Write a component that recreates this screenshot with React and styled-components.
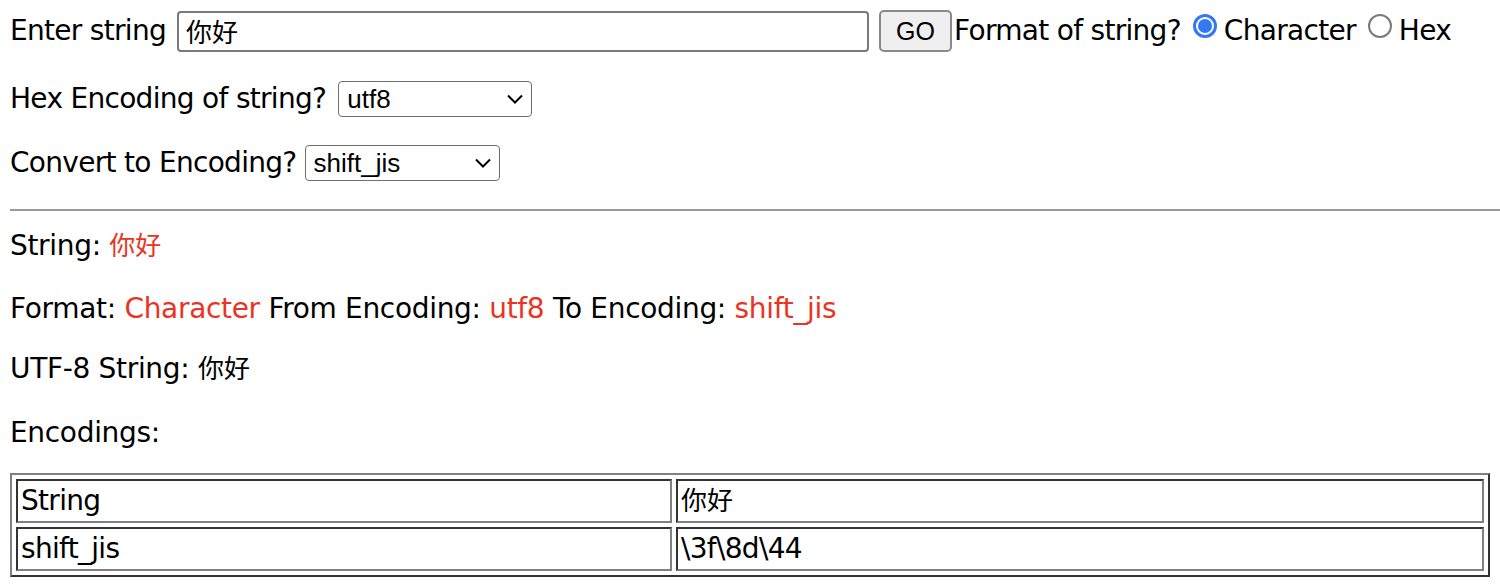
import React from 'react';
import styled, { createGlobalStyle } from 'styled-components';

const GlobalStyle = createGlobalStyle`
  body {
    margin: 0;
    background: #ffffff;
    color: #000000;
    font-family: 'DejaVu Sans', 'Noto Sans CJK SC', sans-serif;
    font-size: 28px;
    letter-spacing: -0.7px;
  }
`;

const Page = styled.div`
  padding: 10px 0 0 10px;
  width: 1490px;
  box-sizing: border-box;
`;

const Row = styled.div`
  display: flex;
  align-items: center;
  height: ${(p) => p.h || 36}px;
  margin-bottom: ${(p) => p.mb || 0}px;
  line-height: 36px;
  white-space: nowrap;
`;

const Label = styled.span`
  margin-right: ${(p) => p.mr || 0}px;
`;

const Cjk = styled.span`
  font-family: 'Noto Sans CJK SC', sans-serif;
  font-size: 26px;
  line-height: 1;
  letter-spacing: 0;
  color: ${(p) => p.color || 'inherit'};
`;

const TextInput = styled.div`
  width: 692px;
  height: 41px;
  box-sizing: border-box;
  border: 2px solid #7a7a7a;
  border-radius: 4px;
  padding: 0 7px;
  display: flex;
  align-items: center;
  margin-right: 10px;
`;

const Button = styled.button`
  width: 73px;
  height: 42px;
  box-sizing: border-box;
  background: #efefef;
  border: 2px solid #8a8a8a;
  border-radius: 5px;
  font-family: 'Liberation Sans', Arial, sans-serif;
  font-size: 25px;
  letter-spacing: 0;
  color: #000;
  padding: 0;
  margin-right: 2px;
`;

const Radio = styled.span`
  width: 24px;
  height: 24px;
  box-sizing: border-box;
  border-radius: 50%;
  border: ${(p) => (p.checked ? '3px solid #3478f6' : '2px solid #7a7a7a')};
  display: inline-flex;
  align-items: center;
  justify-content: center;
  margin: -10px 7px 0 ${(p) => p.ml || 0}px;
  &::after {
    content: '';
    width: 14px;
    height: 14px;
    border-radius: 50%;
    background: ${(p) => (p.checked ? '#3478f6' : 'transparent')};
  }
`;

const Select = styled.div`
  width: ${(p) => p.w || 194}px;
  height: 36px;
  box-sizing: border-box;
  border: 1.5px solid #6f6f6f;
  border-radius: 4px;
  display: flex;
  align-items: center;
  justify-content: space-between;
  padding: 0 7px 0 8px;
  font-family: 'Liberation Sans', Arial, sans-serif;
  font-size: 26px;
  letter-spacing: 0;
  margin-left: ${(p) => p.ml || 10}px;
`;

const Chevron = () => (
  <svg width="18" height="12" viewBox="0 0 18 12">
    <path d="M2 2.5 L9 9.5 L16 2.5" fill="none" stroke="#000" strokeWidth="2" />
  </svg>
);

const Rule = styled.hr`
  border: none;
  height: 2px;
  background: #9a9a9a;
  margin: 28px -10px 17px 0;
`;

const Line = styled.p`
  margin: 0 0 ${(p) => p.mb || 26}px 0;
  line-height: 36px;
  letter-spacing: -0.32px;
  white-space: nowrap;
`;

const Red = styled.span`
  color: #ea3323;
`;

const Table = styled.table`
  width: 1480px;
  margin-top: -4px;
  border-collapse: separate;
  border-spacing: 4px;
  border: 2px solid;
  border-color: #808080 #333333 #333333 #808080;
`;

const Cell = styled.td`
  width: ${(p) => p.w || 'auto'};
  height: 40px;
  padding: 0 3px;
  line-height: 36px;
  border: 2px solid;
  border-color: #333333 #808080 #808080 #333333;
`;

export default function App() {
  return (
    <Page>
      <GlobalStyle />
      <Row h={42} mb={29}>
        <Label mr={11}>Enter string</Label>
        <TextInput>
          <Cjk>你好</Cjk>
        </TextInput>
        <Button>GO</Button>
        <Label>Format of string?</Label>
        <Radio checked ml={12} />
        <Label>Character</Label>
        <Radio ml={12} />
        <Label>Hex</Label>
      </Row>
      <Row mb={28}>
        <Label>Hex Encoding of string?</Label>
        <Select ml={12}>
          <span>utf8</span>
          <Chevron />
        </Select>
      </Row>
      <Row>
        <Label>Convert to Encoding?</Label>
        <Select w={195} ml={8}>
          <span>shift_jis</span>
          <Chevron />
        </Select>
      </Row>
      <Rule />
      <Line mb={27}>
        String: <Cjk color="#ea3323">你好</Cjk>
      </Line>
      <Line mb={24}>
        Format: <Red>Character</Red> From Encoding: <Red>utf8</Red> To Encoding: <Red>shift_jis</Red>
      </Line>
      <Line mb={28}>
        UTF-8 String: <Cjk>你好</Cjk>
      </Line>
      <Line>Encodings:</Line>
      <Table>
        <tbody>
          <tr>
            <Cell w="646px">String</Cell>
            <Cell>
              <Cjk>你好</Cjk>
            </Cell>
          </tr>
          <tr>
            <Cell w="646px">shift_jis</Cell>
            <Cell>\3f\8d\44</Cell>
          </tr>
        </tbody>
      </Table>
    </Page>
  );
}
